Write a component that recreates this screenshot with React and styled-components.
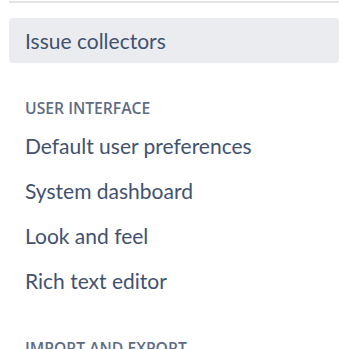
import React from 'react';
import styled, { createGlobalStyle } from 'styled-components';

const GlobalStyle = createGlobalStyle`
  body {
    margin: 0;
    background: #ffffff;
    font-family: Lato, "Noto Sans", sans-serif;
  }
`;

const Sidebar = styled.nav`
  padding: 1px 0 0 9px;
  overflow: hidden;
  height: 349px;
  box-sizing: border-box;
`;

const Divider = styled.div`
  height: 1.5px;
  background: #e3e4e7;
  margin-bottom: 15.5px;
`;

const Section = styled.div`
  margin-top: ${(p) => (p.first ? '0' : '33px')};
`;

const SectionHeader = styled.h3`
  margin: 0 0 3px;
  padding-left: 16px;
  font-family: "Open Sans", "Noto Sans", sans-serif;
  font-size: 15.7px;
  line-height: 24px;
  font-weight: 600;
  color: #5e6c84;
  text-transform: uppercase;
`;

const Item = styled.a`
  display: block;
  height: 45px;
  padding-left: 16px;
  font-size: 21px;
  line-height: 45px;
  color: #42526e;
  text-decoration: none;
  white-space: nowrap;
  border-radius: 4px;
  background: ${(p) => (p.active ? '#ebecf0' : 'transparent')};
`;

const sections = [
  { items: [{ label: 'Issue collectors', active: true }] },
  {
    title: 'User interface',
    items: [
      { label: 'Default user preferences' },
      { label: 'System dashboard' },
      { label: 'Look and feel' },
      { label: 'Rich text editor' },
    ],
  },
  { title: 'Import and export', items: [] },
];

const App = () => {
  return (
    <>
      <GlobalStyle />
      <Sidebar>
        <Divider />
        {sections.map((section, i) => (
          <Section key={i} first={i === 0}>
            {section.title && <SectionHeader>{section.title}</SectionHeader>}
            {section.items.map((item) => (
              <Item key={item.label} href="#" active={item.active}>
                {item.label}
              </Item>
            ))}
          </Section>
        ))}
      </Sidebar>
    </>
  );
};

export default App;
